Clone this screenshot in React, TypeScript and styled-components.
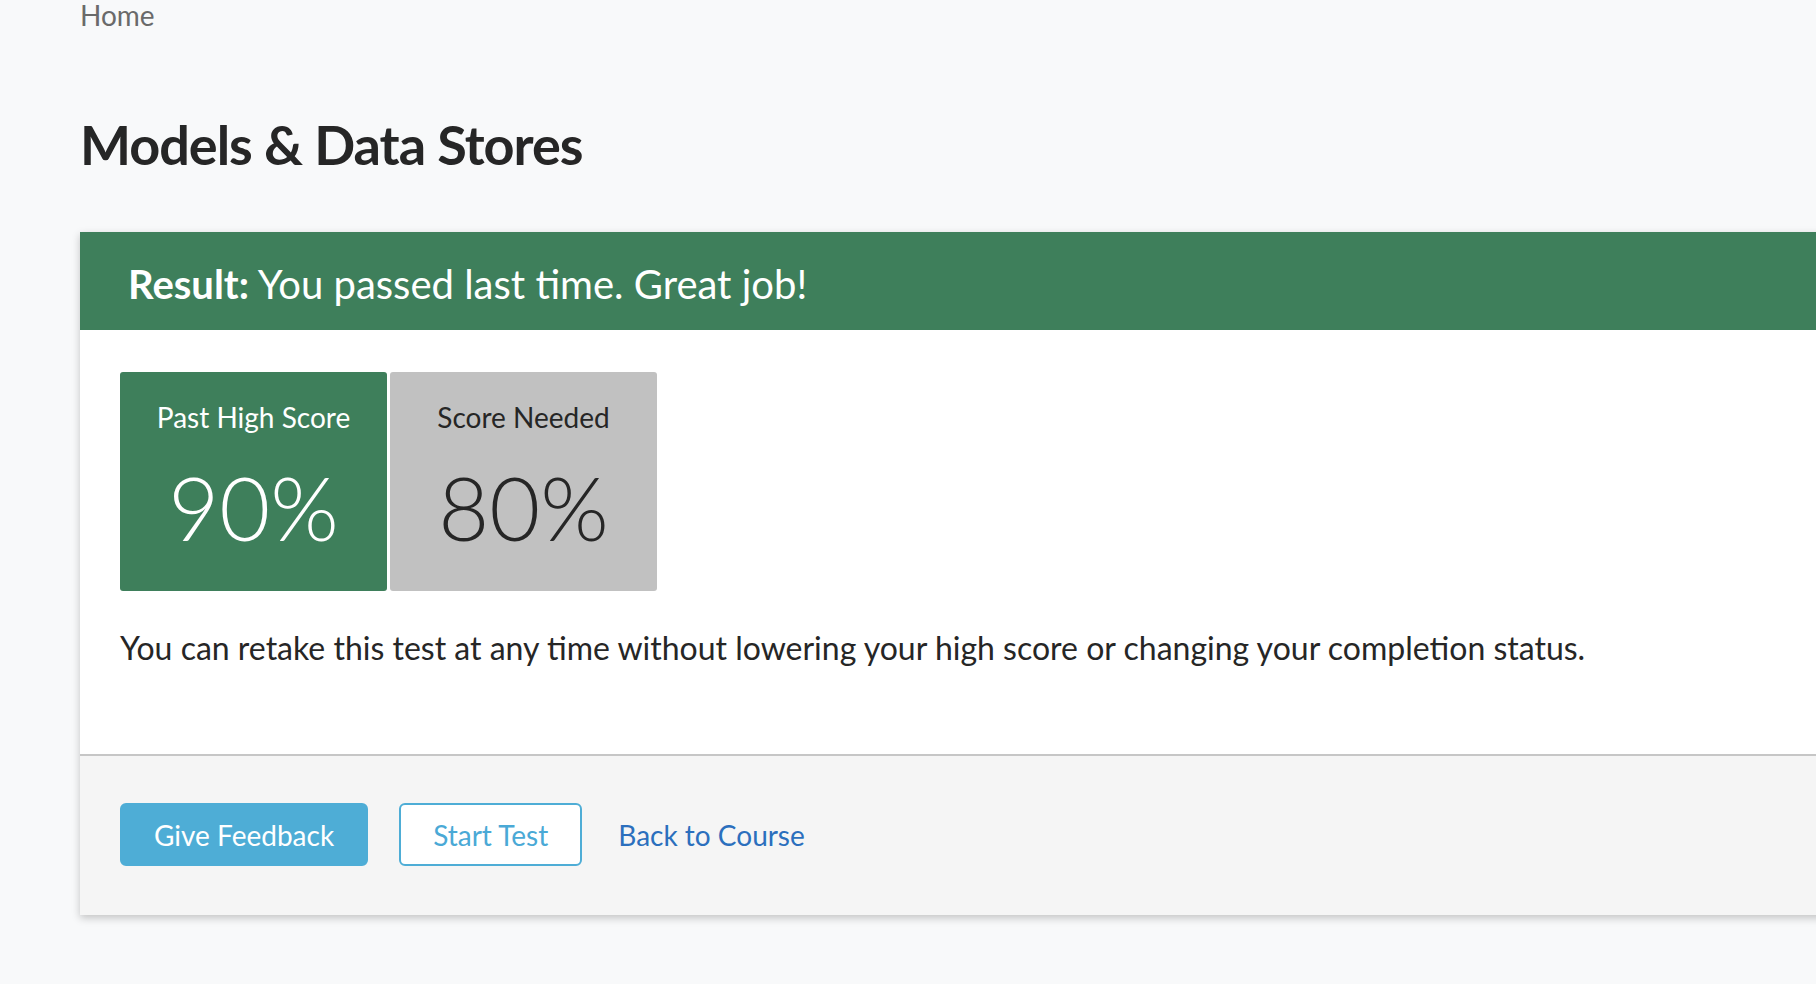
import React from "react";
import styled, { createGlobalStyle } from "styled-components";

const GlobalStyle = createGlobalStyle`
  html, body {
    margin: 0;
    padding: 0;
    background: #f8f9fa;
    overflow: hidden;
  }
  body {
    font-family: Lato, "Open Sans", "Liberation Sans", sans-serif;
    color: #262626;
  }
  * { box-sizing: border-box; }
`;

const Page = styled.div`
  padding-left: 80px;
  min-height: 984px;
`;

const Breadcrumb = styled.nav`
  font-size: 28px;
  line-height: 31px;
  color: #6a6a6a;
`;

const Title = styled.h1`
  margin: 82px 0 54px;
  font-size: 54px;
  line-height: 1.2;
  font-weight: 700;
  letter-spacing: -1px;
  color: #262626;
`;

const Card = styled.section`
  margin-right: -40px;
  background: #ffffff;
  box-shadow: 0 3px 8px rgba(0, 0, 0, 0.22);
`;

const Banner = styled.div`
  background: #3e7f5b;
  color: #ffffff;
  padding: 28px 48px 22px;
  font-size: 40px;
  line-height: 1.2;
  height: 98px;
`;

const Strong = styled.strong`
  font-weight: 700;
`;

const Body = styled.div`
  padding: 42px 40px 87px;
`;

const Scores = styled.div`
  display: flex;
  gap: 3px;
`;

const ScoreBox = styled.div<{ $tone: "green" | "gray" }>`
  width: 267px;
  height: 219px;
  border-radius: 3px;
  padding-top: 29px;
  display: flex;
  flex-direction: column;
  align-items: center;
  background: ${(p) => (p.$tone === "green" ? "#3e7f5b" : "#c1c1c1")};
  color: ${(p) => (p.$tone === "green" ? "#ffffff" : "#262626")};
`;

const ScoreLabel = styled.div`
  font-size: 28px;
  line-height: 1.2;
`;

const ScoreValue = styled.div`
  margin-top: 29px;
  font-size: 88px;
  line-height: 1;
  font-weight: 300;
`;

const Note = styled.p`
  margin: 38px 0 0;
  font-size: 32px;
  line-height: 1.2;
  color: #262626;
`;

const Footer = styled.div`
  border-top: 2px solid #c6c6c6;
  background: #f5f5f5;
  padding: 47px 40px 49px;
  display: flex;
  align-items: center;
`;

const Button = styled.button<{ $variant: "solid" | "outline" }>`
  height: 63px;
  padding: 0 32px;
  border-radius: 6px;
  font-family: inherit;
  font-size: 28px;
  cursor: pointer;
  margin-right: 31px;
  border: 2px solid #4eadd6;
  background: ${(p) => (p.$variant === "solid" ? "#4eadd6" : "#ffffff")};
  color: ${(p) => (p.$variant === "solid" ? "#ffffff" : "#4aa9d6")};
`;

const LinkButton = styled.a`
  margin-left: 5px;
  font-size: 28px;
  color: #2b6fbd;
  text-decoration: none;
`;

export default function App() {
  return (
    <>
      <GlobalStyle />
      <Page>
        <Breadcrumb>Home</Breadcrumb>
        <Title>Models &amp; Data Stores</Title>
        <Card>
          <Banner>
            <Strong>Result:</Strong> You passed last time. Great job!
          </Banner>
          <Body>
            <Scores>
              <ScoreBox $tone="green">
                <ScoreLabel>Past High Score</ScoreLabel>
                <ScoreValue>90%</ScoreValue>
              </ScoreBox>
              <ScoreBox $tone="gray">
                <ScoreLabel>Score Needed</ScoreLabel>
                <ScoreValue>80%</ScoreValue>
              </ScoreBox>
            </Scores>
            <Note>
              You can retake this test at any time without lowering your high
              score or changing your completion status.
            </Note>
          </Body>
          <Footer>
            <Button $variant="solid">Give Feedback</Button>
            <Button $variant="outline">Start Test</Button>
            <LinkButton href="#">Back to Course</LinkButton>
          </Footer>
        </Card>
      </Page>
    </>
  );
}
